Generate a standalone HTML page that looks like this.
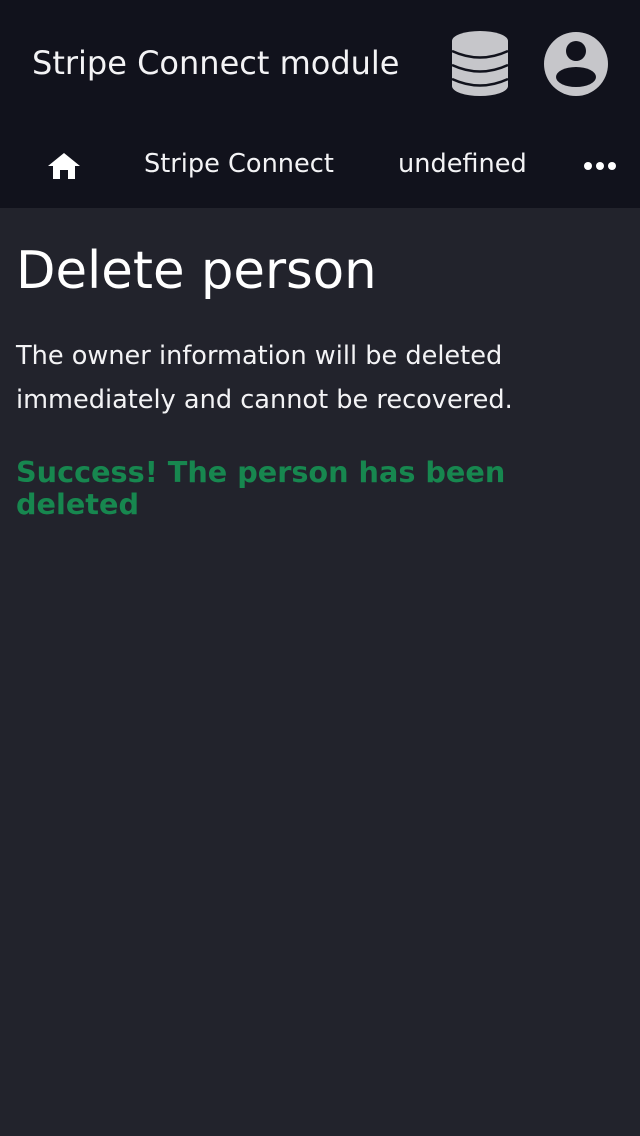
<!DOCTYPE html>
<html><head><meta charset="utf-8"><style>
html,body{margin:0;padding:0;width:640px;height:1136px;background:#22232c;font-family:"DejaVu Sans","Liberation Sans",sans-serif;overflow:hidden}
.top{position:absolute;left:0;top:0;width:640px;height:208px;background:#11121c}
.title{position:absolute;left:32px;top:40px;color:#f3f3f5;font-size:32px;line-height:46px;white-space:nowrap}
.nav{position:absolute;top:145px;color:#f3f3f5;font-size:25.6px;line-height:38px;white-space:nowrap}
h1{position:absolute;left:16px;top:236px;margin:0;color:#fff;font-weight:normal;font-size:51.3px;line-height:70px;white-space:nowrap}
p{position:absolute;left:16px;top:334px;margin:0;color:#f3f3f5;font-size:25.6px;line-height:44px;width:580px}
.ok{position:absolute;left:16px;top:456px;color:#17874f;font-weight:bold;font-size:28.7px;line-height:32px;width:560px}
</style></head><body>
<div class="top"></div>
<div class="title">Stripe Connect module</div>
<svg style="position:absolute;left:450px;top:30px" width="60" height="68" viewBox="0 0 60 68">
<g fill="#c6c6ca">
<ellipse cx="30" cy="11" rx="28" ry="10"/>
<rect x="2" y="11" width="56" height="45"/>
<ellipse cx="30" cy="56" rx="28" ry="10"/>
</g>
<g fill="none" stroke="#11121c" stroke-width="2.5">
<path d="M2 21 Q30 34 58 21"/><path d="M2 35 Q30 48 58 35"/><path d="M2 49 Q30 62 58 49"/>
</g>
</svg>
<svg style="position:absolute;left:544px;top:32px" width="64" height="64" viewBox="0 0 64 64">
<circle cx="32" cy="32" r="32" fill="#c6c6ca"/>
<circle cx="32" cy="19" r="10" fill="#11121c"/>
<ellipse cx="32" cy="45" rx="20" ry="10" fill="#11121c"/>
</svg>
<svg style="position:absolute;left:48px;top:152px" width="32" height="28" viewBox="0 0 32 28">
<path d="M16 1 L32 14 L27 14 L27 27 L20 27 L20 18 L12 18 L12 27 L5 27 L5 14 L0 14 Z" fill="#fff"/>
</svg>
<div class="nav" style="left:144px">Stripe Connect</div>
<div class="nav" style="left:398px">undefined</div>
<svg style="position:absolute;left:583px;top:160px" width="34" height="12"><circle cx="5" cy="6" r="4" fill="#fff"/><circle cx="17" cy="6" r="4" fill="#fff"/><circle cx="29" cy="6" r="4" fill="#fff"/></svg>
<h1>Delete person</h1>
<p>The owner information will be deleted immediately and cannot be recovered.</p>
<div class="ok">Success! The person has been deleted</div>
</body></html>
